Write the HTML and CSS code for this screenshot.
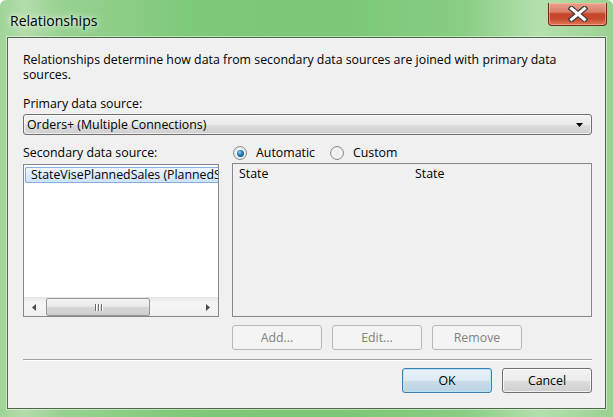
FILE: index.html
```html
<!DOCTYPE html>
<html>
<head>
<meta charset="utf-8">
<title>Relationships</title>
<link rel="stylesheet" href="styles.css">
</head>
<body>
<div class="window">
  <div class="titlebar">
    <span class="title">Relationships</span>
    <div class="close">
      <svg width="20" height="16" viewBox="0 0 20 16">
        <path d="M3.5 2.5 L16.5 13.5 M16.5 2.5 L3.5 13.5" stroke="#3b3b3b" stroke-width="5.5" stroke-linecap="square" fill="none"/>
        <path d="M3.5 2.5 L16.5 13.5 M16.5 2.5 L3.5 13.5" stroke="#ffffff" stroke-width="3" stroke-linecap="square" fill="none"/>
      </svg>
    </div>
  </div>
  <div class="client">
    <p class="desc">Relationships determine how data from secondary data sources are joined with primary data sources.</p>
    <div class="lbl primary-lbl">Primary data source:</div>
    <div class="combo">
      <span>Orders+ (Multiple Connections)</span>
      <svg class="combo-arrow" width="7" height="4" viewBox="0 0 7 4"><path d="M0 0 H7 L3.5 4 Z" fill="#000"/></svg>
    </div>
    <div class="panes">
      <div class="lbl">Secondary data source:</div>
      <div class="radios">
        <span class="radio checked"></span><span class="rtext first">Automatic</span>
        <span class="radio"></span><span class="rtext">Custom</span>
      </div>
      <div class="list">
        <div class="items">
          <div class="item sel">StateVisePlannedSales (PlannedSales)</div>
        </div>
        <div class="hscroll">
          <svg class="arr" width="4" height="7" viewBox="0 0 4 7"><path d="M4 0 V7 L0 3.5 Z" fill="#4a4a4a"/></svg>
          <div class="track">
            <div class="thumb"><span class="grip"></span><span class="grip"></span><span class="grip"></span></div>
          </div>
          <svg class="arr" width="4" height="7" viewBox="0 0 4 7"><path d="M0 0 V7 L4 3.5 Z" fill="#4a4a4a"/></svg>
        </div>
      </div>
      <div class="grid">
        <div class="ghead"><span class="gcol">State</span><span class="gcol">State</span></div>
      </div>
      <div class="btnrow">
        <button class="btn disabled">Add...</button>
        <button class="btn disabled">Edit...</button>
        <button class="btn disabled">Remove</button>
      </div>
    </div>
    <div class="sep"></div>
    <div class="footer">
      <button class="btn default">OK</button>
      <button class="btn normal">Cancel</button>
    </div>
  </div>
</div>
</body>
</html>
```

FILE: styles.css
```css
* { box-sizing: border-box; }
html, body { margin: 0; padding: 0; }
body {
  width: 613px;
  height: 417px;
  overflow: hidden;
  font-family: "Segoe UI", "Open Sans", "Noto Sans", sans-serif;
  font-size: 12.35px;
  color: #000;
}
.window {
  width: 613px;
  height: 417px;
  display: flex;
  flex-direction: column;
  background: linear-gradient(90deg, #9fd497 0%, #b3dcab 4%, #98d291 10%, #7fc97a 30%, #7cc877 55%, #87cd82 75%, #b4e0ad 88%, #a3d69b 96%, #98d190 100%);
  border-radius: 6px 6px 0 0;
}
.titlebar {
  height: 37px;
  display: flex;
  align-items: flex-start;
  justify-content: space-between;
  padding: 0 6px 0 10px;
}
.title {
  font-size: 14px;
  line-height: 16px;
  margin-top: 13px;
  color: #000;
  text-shadow: 0 0 8px rgba(255,255,255,0.9), 0 0 4px rgba(255,255,255,0.8);
}
.close {
  width: 59px;
  height: 23px;
  margin-top: 3px;
  border: 1px solid #6d2a1d;
  border-top: none;
  border-radius: 0 0 4px 4px;
  background: linear-gradient(180deg, #e9a28c 0%, #d9806a 40%, #c7452a 50%, #c9482c 70%, #e07650 100%);
  box-shadow: inset 0 0 0 1px rgba(255,200,180,0.5);
  display: flex;
  align-items: center;
  justify-content: center;
}
.close svg { display: block; }
.client {
  margin: 0 7px;
  height: 372px;
  background: #f0f0f0;
  border: 1px solid #4f6a4a;
  box-shadow: 0 0 0 1px rgba(255,255,255,0.45);
  padding: 14px 13px 0 15px;
}
.desc {
  margin: 0;
  line-height: 15px;
  padding-right: 10px;
}
.lbl { line-height: 16px; }
.primary-lbl { margin-top: 14px; line-height: 15px; }
.combo {
  margin-top: 3px;
  height: 21px;
  border: 1px solid #707070;
  border-radius: 3px;
  background: linear-gradient(180deg, #f2f2f2 0%, #ebebeb 50%, #dddddd 51%, #cfcfcf 100%);
  display: flex;
  align-items: center;
  justify-content: space-between;
  padding: 0 8px 0 3px;
  box-shadow: inset 0 0 0 1px rgba(255,255,255,0.6);
}
.combo span { line-height: 17px; }
.combo-arrow { display: block; }
.panes {
  margin-top: 10px;
  display: grid;
  grid-template-columns: 196px 360px;
  grid-template-rows: 16px 154px 31px;
  column-gap: 13px;
  row-gap: 2px;
}
.radios {
  display: flex;
  align-items: center;
  height: 16px;
}
.radio {
  width: 14px;
  height: 14px;
  border-radius: 50%;
  border: 1px solid #8a8c8e;
  background: radial-gradient(circle at 50% 50%, #e6e6e6 0%, #f6f6f6 45%, #d8d8d8 100%);
  position: relative;
  margin-left: 1px;
  flex: none;
}
.radio.checked::after {
  content: "";
  position: absolute;
  left: 2.5px;
  top: 2.5px;
  width: 7px;
  height: 7px;
  border-radius: 50%;
  background: radial-gradient(circle at 40% 35%, #8fdcff 0%, #2a86c2 35%, #0e3f69 100%);
}
.rtext { margin-left: 9px; line-height: 16px; }
.rtext.first { margin-right: 14px; }
.list {
  grid-row: 2;
  grid-column: 1;
  margin-top: 1px;
  border: 1px solid #828790;
  background: #fff;
  display: flex;
  flex-direction: column;
  overflow: hidden;
}
.items {
  flex: 1;
  overflow: hidden;
  padding: 2px 0 0 1px;
}
.item {
  height: 16px;
  line-height: 14px;
  white-space: nowrap;
  overflow: hidden;
  padding-left: 5px;
  width: 100%;
}
.item.sel {
  border: 1px solid #84acdd;
  border-right: none;
  border-radius: 2px 0 0 2px;
  background: linear-gradient(180deg, #f1f7fe 0%, #dcebfc 50%, #cfe3fc 100%);
}
.hscroll {
  height: 19px;
  display: flex;
  align-items: center;
  background: linear-gradient(180deg, #e9e9e9 0%, #f5f5f5 30%, #f0f0f0 100%);
  border-top: 1px solid #e3e3e3;
}
.hscroll .arr { display: block; margin: 0 8px; flex: none; }
.track { flex: 1; height: 100%; display: flex; align-items: center; }
.thumb {
  width: 104px;
  height: 18px;
  margin-left: 2px;
  border: 1px solid #979797;
  border-radius: 2px;
  background: linear-gradient(180deg, #f3f3f3 0%, #e8e8e8 50%, #d6d6d6 51%, #cfcfcf 100%);
  display: flex;
  justify-content: center;
  align-items: center;
  gap: 2px;
}
.grip {
  width: 1px;
  height: 7px;
  background: #6c6c6c;
  box-shadow: 1px 0 0 #fff;
}
.grid {
  grid-row: 2;
  grid-column: 2;
  border: 1px solid #828790;
  background: #f0f0f0;
}
.ghead {
  display: flex;
  padding: 2px 0 0 6px;
  line-height: 16px;
}
.gcol { width: 180px; }
.btnrow {
  grid-row: 3;
  grid-column: 2;
  display: flex;
  align-items: flex-end;
  gap: 10px;
}
.btn {
  width: 90px;
  height: 25px;
  font-family: inherit;
  font-size: 12.35px;
  border-radius: 3px;
  padding: 0;
  margin: 0;
}
.btn.disabled {
  border: 1px solid #b6b9bc;
  background: #f4f4f4;
  color: #838383;
}
.sep {
  margin-top: 9px;
  height: 1px;
  background: #a0a0a0;
  box-shadow: 0 1px 0 #ffffff;
}
.footer {
  margin-top: 8px;
  display: flex;
  justify-content: flex-end;
  gap: 10px;
}
.btn.default {
  border: 1px solid #3c7fb1;
  background: linear-gradient(180deg, #eaf3f9 0%, #dbe9f3 50%, #c9dce9 51%, #bcd3e3 100%);
  box-shadow: inset 0 0 0 1px #b5e3f8;
  color: #000;
}
.btn.normal {
  border: 1px solid #707070;
  background: linear-gradient(180deg, #f2f2f2 0%, #ebebeb 50%, #dddddd 51%, #cfcfcf 100%);
  box-shadow: inset 0 0 0 1px rgba(255,255,255,0.7);
  color: #000;
}
```
